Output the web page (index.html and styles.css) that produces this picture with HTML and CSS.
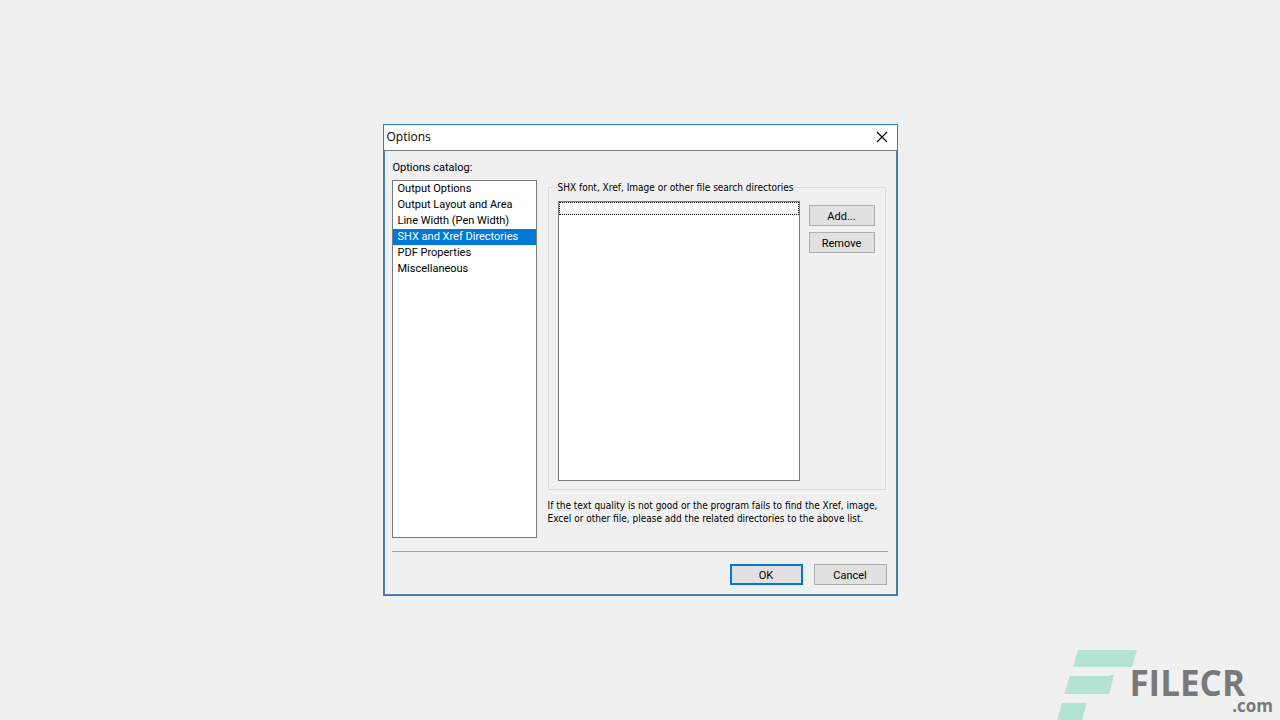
FILE: index.html
```
<!DOCTYPE html>
<html lang="en">
<head>
  <meta charset="UTF-8">
  <meta name="viewport" content="width=device-width, initial-scale=1.0">
  <title>Options</title>
  <link rel="stylesheet" href="styles.css">
</head>
<body>
  <div class="dialog" role="dialog" aria-labelledby="dialogTitle">
    <div class="title-bar">
      <span id="dialogTitle">Options</span>
      <button class="close" aria-label="Close">
        <svg width="12" height="12" viewBox="0 0 12 12"><path d="M1 1 L11 11 M11 1 L1 11" stroke="#000" stroke-width="1.2" fill="none"/></svg>
      </button>
    </div>
    <form class="dialog-body">
      <label class="catalog-label" for="catalog">Options catalog:</label>
      <div class="columns">
        <select id="catalog" class="list catalog" size="22">
          <option>Output Options</option>
          <option>Output Layout and Area</option>
          <option>Line Width (Pen Width)</option>
          <option selected>SHX and Xref Directories</option>
          <option>PDF Properties</option>
          <option>Miscellaneous</option>
        </select>
        <div class="page">
          <fieldset class="group">
            <legend>SHX font, Xref, Image or other file search directories</legend>
            <div class="group-content">
              <select class="list directories" size="20" aria-label="Search directories">
                <option aria-label="Empty"></option>
              </select>
              <div class="group-buttons">
                <button type="button">Add...</button>
                <button type="button">Remove</button>
              </div>
            </div>
          </fieldset>
          <p class="hint">If the text quality is not good or the program fails to find the Xref, image,<br>Excel or other file, please add the related directories to the above list.</p>
        </div>
      </div>
      <div class="footer">
        <button type="button" class="default">OK</button>
        <button type="button">Cancel</button>
      </div>
    </form>
  </div>

  <div class="watermark">
    <svg width="80" height="70" viewBox="0 0 80 70" fill="#b5e3d1">
      <path d="M21 0 H80 L75 17 H16 Z"/>
      <path d="M13 26 H52 L54 25 H57 L52 44 H7 Z"/>
      <path d="M5 53 H30 L25 70 H0 Z"/>
    </svg>
    <div class="brand">
      <span class="brand-name">FILECR</span>
      <span class="brand-domain">.com</span>
    </div>
  </div>
</body>
</html>
```

FILE: styles.css
```
body {
  margin: 0;
  min-height: 100vh;
  display: grid;
  place-items: center;
  background: #f0f0f0;
  color: #000;
  font: 11px/13px Roboto, "Liberation Sans", sans-serif;
}

button, select {
  font: inherit;
  color: inherit;
}

.dialog {
  width: 515px;
  box-sizing: border-box;
  border: 1px solid #2b80c4;
  background: #f0f0f0;
}

.title-bar {
  display: flex;
  align-items: center;
  justify-content: space-between;
  height: 25px;
  padding: 0 8px 0 3px;
  background: #fff;
  border-bottom: 1px solid #7a7f85;
  font: 12px/16px "Open Sans", "Noto Sans", sans-serif;
}

.title-bar span {
  padding-bottom: 2px;
}

.close {
  display: flex;
  padding: 0 1px 2px;
  border: 0;
  background: none;
}

.dialog-body {
  padding: 9px 8px 9px 7px;
  border: 1px solid #4a80ad;
  border-top: 0;
}

.catalog-label {
  display: block;
  padding: 1px 1px 6px;
}

.columns {
  display: flex;
  gap: 11px;
}

.list {
  box-sizing: border-box;
  padding: 0;
  border: 1px solid #7a7a7a;
  border-radius: 0;
  background: #fff;
  overflow: hidden;
  outline: none;
}

.catalog {
  flex: none;
  width: 145px;
  height: 358px;
}

.catalog option {
  min-height: 16px;
  padding: 1px 5px 0;
  line-height: 15px;
  box-sizing: border-box;
}

.catalog option:checked {
  background: #0078d7 linear-gradient(#0078d7, #0078d7);
  color: #fff;
}

.page {
  flex: 1;
  min-width: 0;
  padding: 1px 2px 0 0;
}

.group {
  min-width: 0;
  margin: 0;
  padding: 0 10px 8px 9px;
  border: 1px solid #dcdcdc;
}

.group legend,
.hint {
  font-family: "DejaVu Sans Condensed", "Liberation Sans", sans-serif;
  font-size: 10px;
}

.group legend {
  padding: 0 1px;
  margin-left: -1px;
}

.group-content {
  display: flex;
  gap: 9px;
  padding-top: 7px;
}

.directories {
  flex: 1;
  height: 280px;
}

.directories option {
  box-sizing: border-box;
  min-height: 13px;
  height: 13px;
  padding: 0;
  border: 1px dotted #000;
}

.group-buttons {
  display: flex;
  flex-direction: column;
  gap: 6px;
  width: 66px;
  padding-top: 4px;
}

.dialog-body button {
  height: 21px;
  padding: 1px 0 0;
  border: 1px solid #adadad;
  background: #e1e1e1;
}

.hint {
  margin: 9px 0 0;
  white-space: nowrap;
}

.footer {
  display: flex;
  justify-content: flex-end;
  gap: 11px;
  margin-top: 13px;
  padding: 12px 1px 0 0;
  border-top: 1px solid #a0a0a0;
}

.footer button {
  width: 73px;
}

.dialog-body .default {
  border: 2px solid #0078d7;
}

/* site mark in the bottom corner, over the page */
.watermark {
  position: absolute;
  right: 7px;
  bottom: 0;
  display: flex;
}

.watermark svg {
  margin-right: -8px;
}

.brand {
  display: flex;
  flex-direction: column;
  padding-top: 15px;
  color: #797979;
  font-family: "Open Sans", sans-serif;
  font-weight: 700;
}

.brand-name {
  padding-right: 28px;
  font-size: 35px;
  line-height: 36px;
}

.brand-domain {
  align-self: flex-end;
  font-size: 17px;
  line-height: 10px;
}
```
